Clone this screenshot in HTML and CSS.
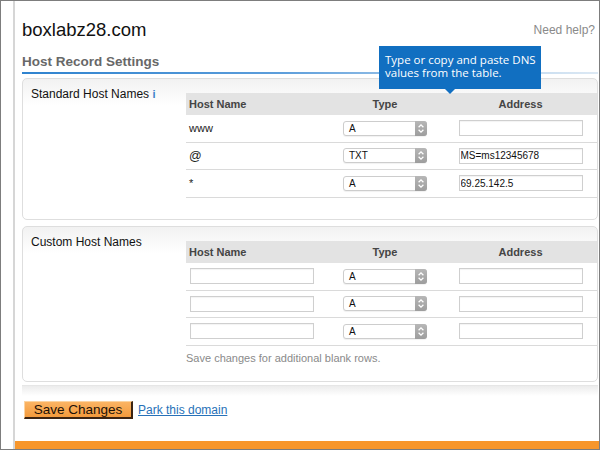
FILE: index.html
```html
<!DOCTYPE html>
<html>
<head>
<meta charset="utf-8">
<title>Host Record Settings</title>
<link rel="stylesheet" href="styles.css">
</head>
<body>
<div class="frame">
  <div class="strip"></div>
  <div class="main">
    <div class="content">
      <div class="topbar">
        <div class="domain">boxlabz28.com</div>
        <div class="help">Need help?</div>
      </div>
      <h2 class="section-title">Host Record Settings</h2>
      <div class="rule"></div>

      <div class="panel">
        <div class="label">Standard Host Names <span class="info">i</span></div>
        <div class="table">
          <div class="row head"><div class="c1">Host Name</div><div class="c2">Type</div><div class="c3">Address</div></div>
          <div class="row">
            <div class="c1">www</div>
            <div class="c2"><div class="select"><span class="val">A</span><span class="arrows"><svg width="12" height="15" viewBox="0 0 12 15"><path d="M3.6 6.2 L6 3.9 L8.4 6.2 M3.6 8.8 L6 11.1 L8.4 8.8" fill="none" stroke="#fff" stroke-width="1.3"/></svg></span></div></div>
            <div class="c3"><input class="field" type="text" value=""></div>
          </div>
          <div class="row">
            <div class="c1 at">@</div>
            <div class="c2"><div class="select"><span class="val">TXT</span><span class="arrows"><svg width="12" height="15" viewBox="0 0 12 15"><path d="M3.6 6.2 L6 3.9 L8.4 6.2 M3.6 8.8 L6 11.1 L8.4 8.8" fill="none" stroke="#fff" stroke-width="1.3"/></svg></span></div></div>
            <div class="c3"><input class="field" type="text" value="MS=ms12345678"></div>
          </div>
          <div class="row">
            <div class="c1">*</div>
            <div class="c2"><div class="select"><span class="val">A</span><span class="arrows"><svg width="12" height="15" viewBox="0 0 12 15"><path d="M3.6 6.2 L6 3.9 L8.4 6.2 M3.6 8.8 L6 11.1 L8.4 8.8" fill="none" stroke="#fff" stroke-width="1.3"/></svg></span></div></div>
            <div class="c3"><input class="field" type="text" value="69.25.142.5"></div>
          </div>
        </div>
      </div>

      <div class="panel custom">
        <div class="label">Custom Host Names</div>
        <div class="table">
          <div class="row head"><div class="c1">Host Name</div><div class="c2">Type</div><div class="c3">Address</div></div>
          <div class="row">
            <div class="c1"><input class="field host" type="text" value=""></div>
            <div class="c2"><div class="select"><span class="val">A</span><span class="arrows"><svg width="12" height="15" viewBox="0 0 12 15"><path d="M3.6 6.2 L6 3.9 L8.4 6.2 M3.6 8.8 L6 11.1 L8.4 8.8" fill="none" stroke="#fff" stroke-width="1.3"/></svg></span></div></div>
            <div class="c3"><input class="field" type="text" value=""></div>
          </div>
          <div class="row">
            <div class="c1"><input class="field host" type="text" value=""></div>
            <div class="c2"><div class="select"><span class="val">A</span><span class="arrows"><svg width="12" height="15" viewBox="0 0 12 15"><path d="M3.6 6.2 L6 3.9 L8.4 6.2 M3.6 8.8 L6 11.1 L8.4 8.8" fill="none" stroke="#fff" stroke-width="1.3"/></svg></span></div></div>
            <div class="c3"><input class="field" type="text" value=""></div>
          </div>
          <div class="row">
            <div class="c1"><input class="field host" type="text" value=""></div>
            <div class="c2"><div class="select"><span class="val">A</span><span class="arrows"><svg width="12" height="15" viewBox="0 0 12 15"><path d="M3.6 6.2 L6 3.9 L8.4 6.2 M3.6 8.8 L6 11.1 L8.4 8.8" fill="none" stroke="#fff" stroke-width="1.3"/></svg></span></div></div>
            <div class="c3"><input class="field" type="text" value=""></div>
          </div>
          <div class="note">Save changes for additional blank rows.</div>
        </div>
      </div>

      <div class="divider"></div>

      <div class="actions">
        <button class="btn" type="button">Save Changes</button>
        <a class="link" href="#">Park this domain</a>
      </div>
    </div>
    <div class="footer"></div>
  </div>
  <div class="tooltip">Type or copy and paste DNS<br>values from the table.</div>
</div>
</body>
</html>
```

FILE: styles.css
```css
* { box-sizing: border-box; }
html, body { margin: 0; padding: 0; background: #fff; }

.frame {
  width: 600px;
  height: 450px;
  border: 1px solid #7d7d7d;
  display: flex;
  position: relative;
  overflow: hidden;
  background: #fff;
  font-family: "Liberation Sans", Arial, Helvetica, sans-serif;
}

.strip { width: 12px; flex: none; }

.main {
  flex: 1;
  min-width: 0;
  border-left: 2px solid #d6d6d6;
  display: flex;
  flex-direction: column;
}

.content { padding: 18px 1px 0 7px; }

.topbar {
  display: flex;
  justify-content: space-between;
  align-items: flex-end;
  height: 22px;
}
.domain { font-size: 18.5px; line-height: 22px; color: #111; }
.help { font-size: 12px; line-height: 14px; color: #8a8a8a; margin-bottom: 4px; margin-right: 3px; white-space: nowrap; }

.section-title {
  margin: 13px 0 0;
  padding-bottom: 2px;
  font-size: 13.5px;
  line-height: 16px;
  font-weight: bold;
  color: #686868;
}
.rule {
  height: 2px;
  background: linear-gradient(90deg, #2f83cf 0%, #5d9edb 45%, #b9d5ee 80%, #dde9f4 100%);
}

.panel {
  margin-top: 4px;
  border: 1px solid #dedede;
  border-radius: 5px;
  padding: 8px 0 21px 8px;
  display: flex;
  align-items: flex-start;
  background: linear-gradient(#f2f2f2, #ffffff 26px);
}
.panel.custom { margin-top: 6.5px; padding-bottom: 16px; }

.label { width: 155px; flex: none; font-size: 12px; line-height: 14px; color: #111; }
.info { color: #3c80c9; font-weight: bold; font-size: 11px; }

.table { flex: 1; margin-top: 6px; }

.row {
  display: grid;
  grid-template-columns: 140px 118px 1fr;
  align-items: center;
  height: 27.5px;
  border-bottom: 1px solid #dadada;
  font-size: 11px;
  color: #1a1a1a;
}
.row.head {
  height: 22px;
  background: #e3e3e3;
  border-bottom: none;
  font-weight: bold;
  color: #454545;
}
.c1 { padding-left: 3px; }
.c2, .c3 { display: flex; justify-content: center; }
.at { font-size: 12.5px; }

.field {
  display: block;
  width: 124px;
  height: 16px;
  margin: 0;
  padding: 0 1px;
  border: 1px solid #cfcfcf;
  border-radius: 0;
  box-shadow: inset 0 1px 1px rgba(0,0,0,0.05);
  background: #fff;
  font-family: "Liberation Sans", Arial, sans-serif;
  font-size: 10px;
  color: #111;
  outline: none;
}
.field.host { margin-left: 1px; }

.select {
  width: 84px;
  height: 15px;
  border: 1px solid #cdcdcd;
  border-radius: 3px;
  display: flex;
  align-items: center;
  background: #fff;
  box-shadow: 0 1px 1px rgba(0,0,0,0.06);
  font-size: 10px;
  color: #111;
}
.select .val { flex: 1; padding-left: 5px; line-height: 13px; }
.arrows {
  width: 12px;
  height: 15px;
  margin: -1px -1px -1px 0;
  border-radius: 0 3px 3px 0;
  background: linear-gradient(#b7b7b7, #9d9d9d);
  display: flex;
  align-items: center;
  justify-content: center;
}
.arrows svg { display: block; }

.note { font-size: 11px; line-height: 13px; color: #8a8a8a; margin-top: 6px; }

.divider {
  margin-top: 3px;
  height: 11px;
  border-top: 1px solid #e6e6e6;
  background: linear-gradient(#ececec, #ffffff);
}

.actions {
  display: flex;
  align-items: center;
  gap: 5px;
  margin-top: 5px;
  padding-left: 2px;
}
.btn {
  width: 109px;
  height: 18px;
  padding: 0;
  border-style: solid;
  border-width: 1px 2px 2px 1px;
  border-color: #fcd4a2 #3c2412 #3c2412 #fcd4a2;
  background: linear-gradient(#fbb464, #f39a3c);
  font-family: "Liberation Sans", Arial, sans-serif;
  font-size: 13.5px;
  line-height: 15px;
  color: #1c1007;
}
.link {
  font-size: 12px;
  line-height: 14px;
  color: #2771b8;
  text-decoration: underline;
}

.footer {
  margin-top: auto;
  height: 8px;
  background: #f7962b;
}

.tooltip {
  position: absolute;
  left: 378px;
  top: 45px;
  width: 162px;
  height: 43px;
  padding: 8px 4px 0 6px;
  background: #116fc1;
  color: #fff;
  font-family: "Open Sans", "Liberation Sans", sans-serif;
  font-size: 11.5px;
  line-height: 12.7px;
  white-space: nowrap;
}
.tooltip::after {
  content: "";
  position: absolute;
  left: 66px;
  top: 100%;
  border-left: 5px solid transparent;
  border-right: 5px solid transparent;
  border-top: 5px solid #116fc1;
}
```
